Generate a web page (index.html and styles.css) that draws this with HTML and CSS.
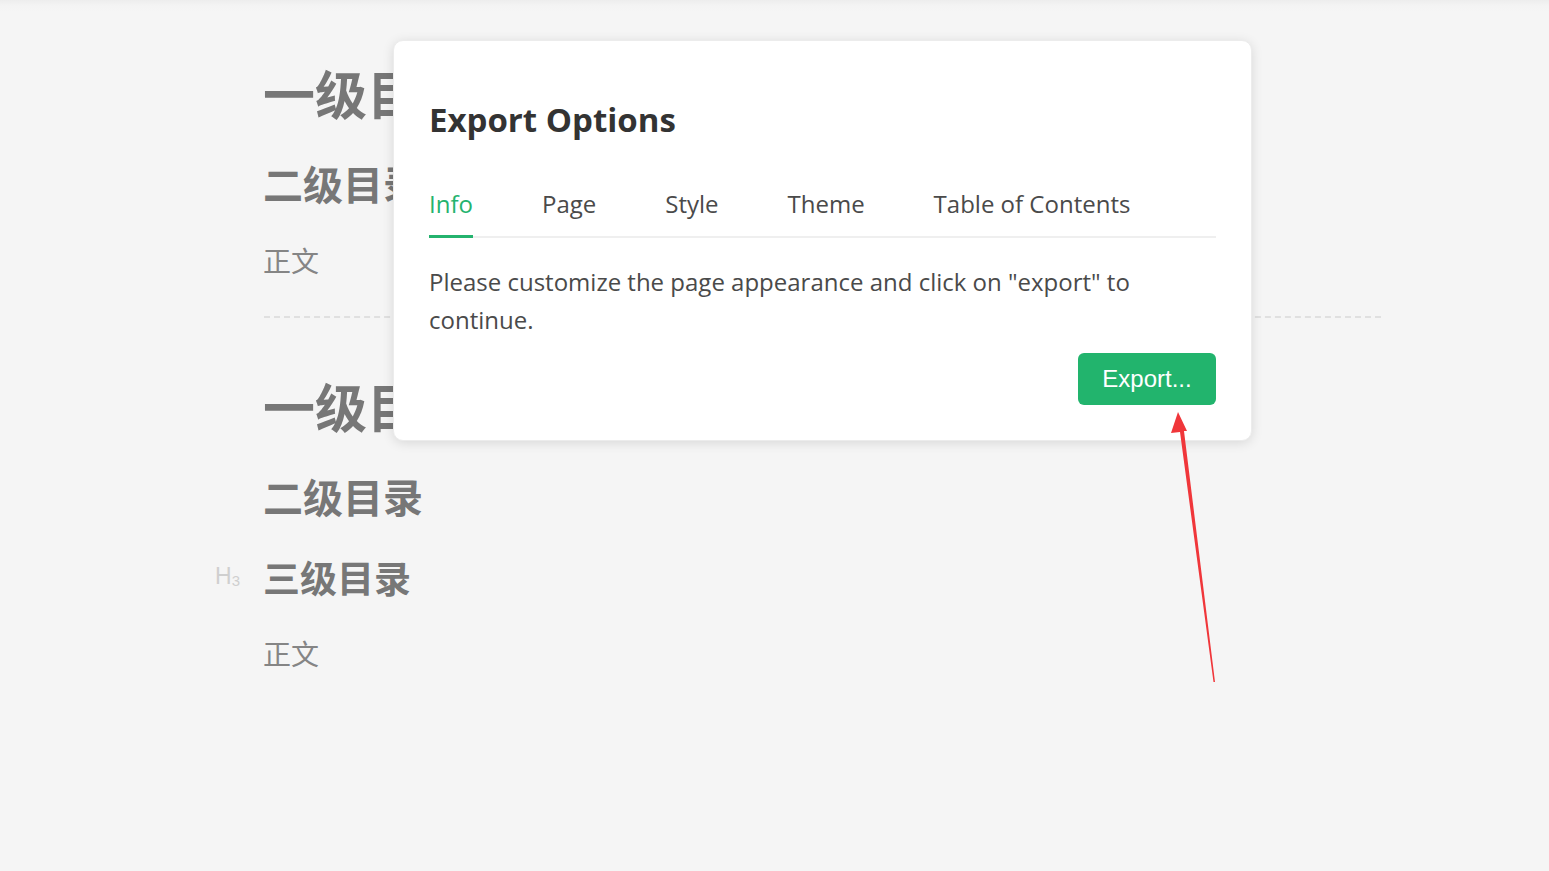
FILE: index.html
```html
<!DOCTYPE html>
<html lang="zh">
<head>
<meta charset="utf-8">
<title>Export Options</title>
<link rel="stylesheet" href="styles.css">
</head>
<body>
<main class="doc">
  <h1 class="h1 first">一级目录</h1>
  <h2 class="h2">二级目录</h2>
  <p class="para">正文</p>
  <hr class="rule">
  <h1 class="h1">一级目录</h1>
  <h2 class="h2">二级目录</h2>
  <h3 class="h3"><span class="hmark">H<sub>3</sub></span>三级目录</h3>
  <p class="para">正文</p>
</main>

<section class="dialog">
  <h2 class="dialog-title">Export Options</h2>
  <nav class="tabs">
    <span class="tab active">Info</span>
    <span class="tab">Page</span>
    <span class="tab">Style</span>
    <span class="tab">Theme</span>
    <span class="tab">Table of Contents</span>
  </nav>
  <p class="dialog-text">Please customize the page appearance and click on "export" to continue.</p>
  <div class="actions">
    <button class="btn">Export...</button>
  </div>
</section>

<svg class="arrow" width="1549" height="871" viewBox="0 0 1549 871">
  <polygon points="1178,412 1187,431 1184,431 1215,682 1213.5,682 1180,432 1171,433" fill="#f0363a"/>
</svg>
</body>
</html>
```

FILE: styles.css
```css
html, body {
  margin: 0;
  padding: 0;
}
body {
  width: 1549px;
  height: 871px;
  overflow: hidden;
  background: linear-gradient(#ededed 0px, #f4f4f4 6px, #f5f5f5 12px);
  font-family: "Open Sans", "Noto Sans CJK SC", sans-serif;
  position: relative;
}
.doc {
  padding: 62px 0 0 263px;
  width: 1118px;
  color: #777;
  font-family: "Noto Sans CJK SC", "Noto Sans", sans-serif;
}
.h1 {
  font-size: 52px;
  line-height: 62px;
  font-weight: 700;
  margin: 57px 0 0;
}
.h1.first {
  margin-top: 0;
}
.h2 {
  font-size: 40px;
  line-height: 48px;
  font-weight: 700;
  margin: 35px 0 0;
}
.h3 {
  position: relative;
  font-size: 37px;
  line-height: 44px;
  font-weight: 700;
  margin: 35px 0 0;
}
.hmark {
  position: absolute;
  left: -48px;
  top: -1px;
  font-family: "Liberation Sans", sans-serif;
  font-weight: 400;
  font-size: 23px;
  color: #cfcfcf;
}
.hmark sub {
  font-size: 15px;
  vertical-align: -2px;
}
.para {
  font-size: 28px;
  line-height: 40px;
  color: #858585;
  margin: 33px 0 0;
}
.h3 + .para {
  margin-top: 34px;
}
.rule {
  border: 0;
  border-top: 2px dashed #e0e0e0;
  margin: 36px 0 0 1px;
  height: 0;
}

.dialog {
  position: absolute;
  left: 393px;
  top: 40px;
  width: 787px;
  padding: 57px 35px 35px 35px;
  background: #fff;
  border-radius: 10px;
  box-shadow: 0 2px 12px rgba(0, 0, 0, 0.12);
  border: 1px solid #ececec;
  box-sizing: content-box;
}
.dialog-title {
  margin: 0;
  font-family: "Open Sans", sans-serif;
  font-weight: 700;
  font-size: 33px;
  line-height: 43px;
  color: #333;
}
.tabs {
  display: flex;
  gap: 69px;
  margin-top: 47px;
  border-bottom: 2px solid #efefef;
}
.tab {
  font-size: 24px;
  line-height: 32px;
  color: #4a4a4a;
  padding-bottom: 15px;
  margin-bottom: -2px;
  border-bottom: 3px solid transparent;
}
.tab.active {
  color: #24b36e;
  border-bottom-color: #24b36e;
}
.dialog-text {
  margin: 25px 0 0;
  font-size: 24px;
  line-height: 38px;
  color: #4a4a4a;
}
.actions {
  display: flex;
  justify-content: flex-end;
  margin-top: 14px;
}
.btn {
  width: 138px;
  height: 52px;
  border: 0;
  border-radius: 6px;
  background: #22b46d;
  color: #fff;
  font-family: "Liberation Sans", Arial, sans-serif;
  font-size: 24px;
  padding: 0;
}
.arrow {
  position: absolute;
  left: 0;
  top: 0;
  pointer-events: none;
}
```
